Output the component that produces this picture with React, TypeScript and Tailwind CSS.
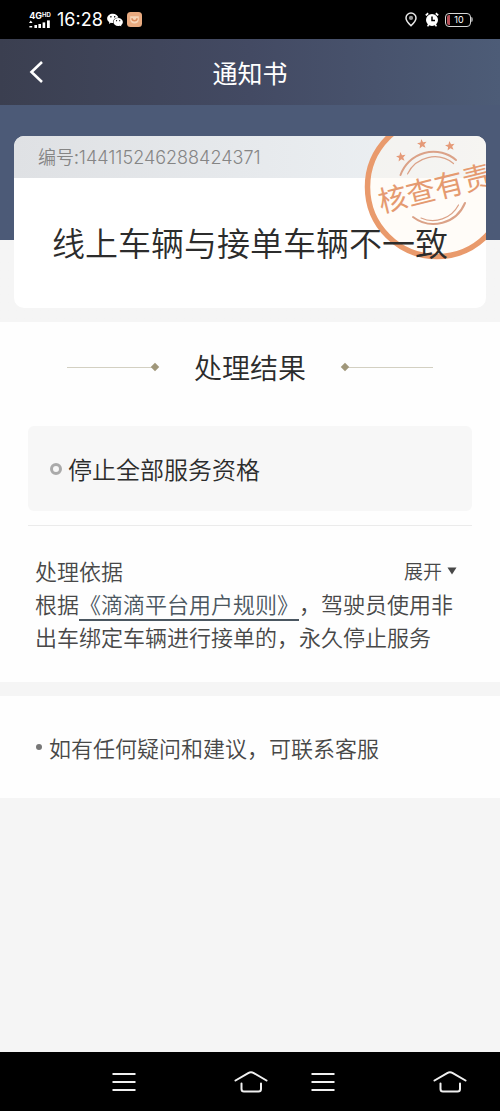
import { AiFillWechat } from "react-icons/ai";

const SignalIcon = () => (
  <div className="flex flex-col items-center font-['Inter',sans-serif] text-white">
    <div className="flex items-start font-bold leading-none">
      <span className="text-[9px] leading-[9px]">4G</span>
      <span className="text-[6px] leading-[7px]">HD</span>
    </div>
    <svg width="22" height="8" viewBox="0 0 22 8" fill="currentColor" aria-hidden="true">
      <path d="M0 3 L1.8 0.6 L3.6 3 Z M0.4 6 H3.2 V7.6 H0.4 Z" />
      <rect x="5.4" y="5" width="2.6" height="3" />
      <rect x="9.4" y="4" width="2.6" height="4" />
      <rect x="13.6" y="2.4" width="2.6" height="5.6" />
      <rect x="18" y="0.4" width="2.8" height="7.6" />
    </svg>
  </div>
);

const StatusBar = () => (
  <div className="flex h-[39px] items-center justify-between bg-black pr-[27px] pl-[29px] font-normal text-white">
    <div className="flex items-center">
      <SignalIcon />
      <span className="ml-[6px] font-['Inter',sans-serif] text-[18px] leading-none">16:28</span>
      <AiFillWechat className="ml-[3px] size-[18px]" />
      <svg className="ml-[3px]" width="15" height="15" viewBox="0 0 15 15" aria-hidden="true">
        <rect width="15" height="15" rx="3.5" fill="#e8aa80" />
        <path
          d="M3.2 4.2 H11.8 V7.5 C11.8 9.8 10 11.6 7.5 11.6 C5 11.6 3.2 9.8 3.2 7.5 Z"
          fill="#f6d5b8"
        />
        <path d="M5 6.2 C5 9.6 10 9.6 10 6.2" fill="none" stroke="#d98a5c" strokeWidth="1.5" />
      </svg>
    </div>
    <div className="flex items-center gap-2">
      <svg width="12" height="15" viewBox="0 0 12 15" fill="none" aria-hidden="true">
        <path
          d="M6 13.8 C3.6 11.4 1 8.8 1 5.9 A5 4.9 0 0 1 11 5.9 C11 8.8 8.4 11.4 6 13.8 Z"
          stroke="#e8e8e8"
          strokeWidth="1.5"
        />
        <circle cx="6" cy="5.9" r="2.1" fill="#999" />
      </svg>
      <svg width="14" height="15" viewBox="0 0 14 15" aria-hidden="true">
        <circle cx="7" cy="8" r="6" fill="#fff" />
        <path d="M0.8 3.4 L3.2 1.3 M13.2 3.4 L10.8 1.3" stroke="#fff" strokeWidth="1.8" />
        <path d="M2.6 14.4 L3.8 12.4 M11.4 14.4 L10.2 12.4" stroke="#fff" strokeWidth="1.5" />
        <path d="M7 4.6 V8.6 H10" fill="none" stroke="#000" strokeWidth="1.5" />
      </svg>
      <div className="-ml-[2px] flex items-center">
        <div className="flex h-[14px] w-[26px] items-center rounded-[4px] border border-[#d8d8d8] pl-px">
          <span className="h-[10px] w-[3px] rounded-l-[2px] bg-[#b55058]" />
          <span className="flex-1 pr-[2px] text-center font-['Inter',sans-serif] text-[9px] leading-none">
            10
          </span>
        </div>
        <span className="h-[5px] w-[2px] rounded-r-full bg-[#8a8a8a]" />
      </div>
    </div>
  </div>
);

const Star = ({ x, y }: { x: number; y: number }) => (
  <path
    transform={`translate(${x} ${y}) rotate(-8)`}
    d="M0 -5 L1.3 -1.7 L4.8 -1.5 L2.1 0.8 L3 4.2 L0 2.3 L-3 4.2 L-2.1 0.8 L-4.8 -1.5 L-1.3 -1.7 Z"
    fill="#e59a78"
  />
);

// cut off by the card's top and right edges
const Stamp = () => (
  <svg
    className="absolute -top-[23px] -right-[25px]"
    width="148"
    height="148"
    viewBox="0 0 148 148"
    fill="none"
    aria-hidden="true"
  >
    <circle cx="74" cy="74" r="69.5" fill="#fff8f0" fillOpacity="0.45" stroke="#e99a6c" strokeWidth="5.5" />
    <Star x={38} y={44} />
    <Star x={59} y={31} />
    <Star x={87} y={33} />
    <g stroke="#dba288" strokeLinecap="round">
      <path d="M37.5 62 A35 35 0 0 1 93 47" strokeWidth="2" />
      <path d="M44.5 61 A30 30 0 0 1 90.5 50.5" strokeWidth="1.2" />
      <path d="M50 104 A34 34 0 0 0 102 90" strokeWidth="2" />
      <path d="M58 105 A29 29 0 0 0 95.5 92" strokeWidth="1.2" />
    </g>
    <text
      x="72"
      y="86"
      transform="rotate(-14 72 76)"
      textAnchor="middle"
      fill="#e59a70"
      className="text-[29px] font-normal"
    >
      核查有责
    </text>
  </svg>
);

const Diamond = () => <span className="size-[6px] shrink-0 rotate-45 bg-[#a0977a]" />;

const MenuIcon = () => (
  <svg width="24" height="22" viewBox="0 0 24 22" stroke="#f0f0f0" strokeWidth="2" aria-hidden="true">
    <path d="M0.5 3 H23.5 M0.5 11 H23.5 M0.5 19 H23.5" />
  </svg>
);

const HomeIcon = () => (
  <svg
    width="34"
    height="22"
    viewBox="0 0 34 22"
    fill="none"
    stroke="#f0f0f0"
    strokeWidth="2"
    strokeLinecap="round"
    aria-hidden="true"
  >
    <path d="M1.5 9.5 L14.2 2.1 Q17 0.5 19.8 2.1 L32.5 9.5" />
    <path d="M7.5 12.5 V18 Q7.5 20.5 10 20.5 H24.5 Q27 20.5 27 18 V12.5" />
  </svg>
);

const NavGroup = () => (
  <div className="flex items-center gap-[98px]">
    <button aria-label="菜单">
      <MenuIcon />
    </button>
    <button aria-label="主页">
      <HomeIcon />
    </button>
  </div>
);

const App = () => {
  return (
    <div className="flex min-h-screen flex-col bg-[#f5f5f5] font-['Noto_Sans_CJK_SC',sans-serif] font-[350] text-[#2c2c2c] [text-spacing-trim:space-all]">
      <StatusBar />
      <header className="grid h-[66px] grid-cols-[1fr_auto_1fr] items-center bg-linear-to-r from-[#3b3f50] via-[#434a63] to-[#4d5c77] px-6 text-white">
        <button aria-label="返回" className="justify-self-start">
          <svg
            width="24"
            height="24"
            viewBox="0 0 24 24"
            fill="none"
            stroke="currentColor"
            strokeWidth="2.6"
            aria-hidden="true"
          >
            <path d="M18 2 L7.5 12 L18 22" />
          </svg>
        </button>
        <h1 className="text-[25px] leading-9 font-normal">通知书</h1>
      </header>

      <section className="bg-linear-to-b from-[#4c5a77] from-[135px] to-[#f5f5f5] to-[135px] px-[14px] pt-[31px] pb-[14px]">
        <div className="relative overflow-hidden rounded-[10px] bg-white">
          <div className="h-[42px] bg-linear-to-r from-[#dfe1e4] to-[#eef2f5] pl-6 text-[18px] leading-10 text-[#858585]">
            编号:<span className="font-['Inter',sans-serif]">144115246288424371</span>
          </div>
          <Stamp />
          <h2 className="relative pt-10 pb-[42px] text-center text-[33px] leading-[48px] font-[350] whitespace-nowrap">
            线上车辆与接单车辆不一致
          </h2>
        </div>
      </section>

      <section className="bg-[#fefefe] px-7 pt-[25px] pb-[29px]">
        <div className="flex items-center px-[39px]">
          <span className="h-px flex-1 bg-[#d3d0c2]" />
          <Diamond />
          <h3 className="px-[36px] text-[28px] leading-10 font-[350]">处理结果</h3>
          <Diamond />
          <span className="h-px flex-1 bg-[#d3d0c2]" />
        </div>
        <div className="mt-[39px] flex h-[85px] items-center gap-[6px] rounded-[6px] bg-[#f7f7f7] pl-[22px]">
          <span className="size-[12px] rounded-full border-[3px] border-[#aaa]" />
          <span className="text-[24px] leading-9">停止全部服务资格</span>
        </div>
        <hr className="mt-[14px] border-[#ebebeb]" />
        <div className="mt-[28px] px-[7px] text-[22px] leading-[33px] text-[#484848]">
          <div className="flex items-center justify-between pr-[8px]">
            <h4>处理依据</h4>
            <button className="flex items-center gap-[5px] text-[19px]">
              展开
              <svg width="10" height="8" viewBox="0 0 10 8" fill="#484848" aria-hidden="true">
                <path d="M0.5 0.5 H9.5 L5 7.5 Z" />
              </svg>
            </button>
          </div>
          <p>
            根据
            <a href="#" className="border-b-2 border-[#4b5761] text-[#4b5761]">
              《滴滴平台用户规则》
            </a>
            ，驾驶员使用非出车绑定车辆进行接单的，永久停止服务
          </p>
        </div>
      </section>

      <section className="mt-[14px] flex h-[102px] items-center gap-[7px] bg-[#fefefe] pl-[36px]">
        <span className="size-[6px] rounded-full bg-[#777]" />
        <p className="text-[22px] leading-[33px] text-[#484848]">如有任何疑问和建议，可联系客服</p>
      </section>

      <nav className="mt-auto flex h-[59px] items-center justify-end gap-[43px] bg-black pr-[33px]">
        <NavGroup />
        <NavGroup />
      </nav>
    </div>
  );
};

export default App;
